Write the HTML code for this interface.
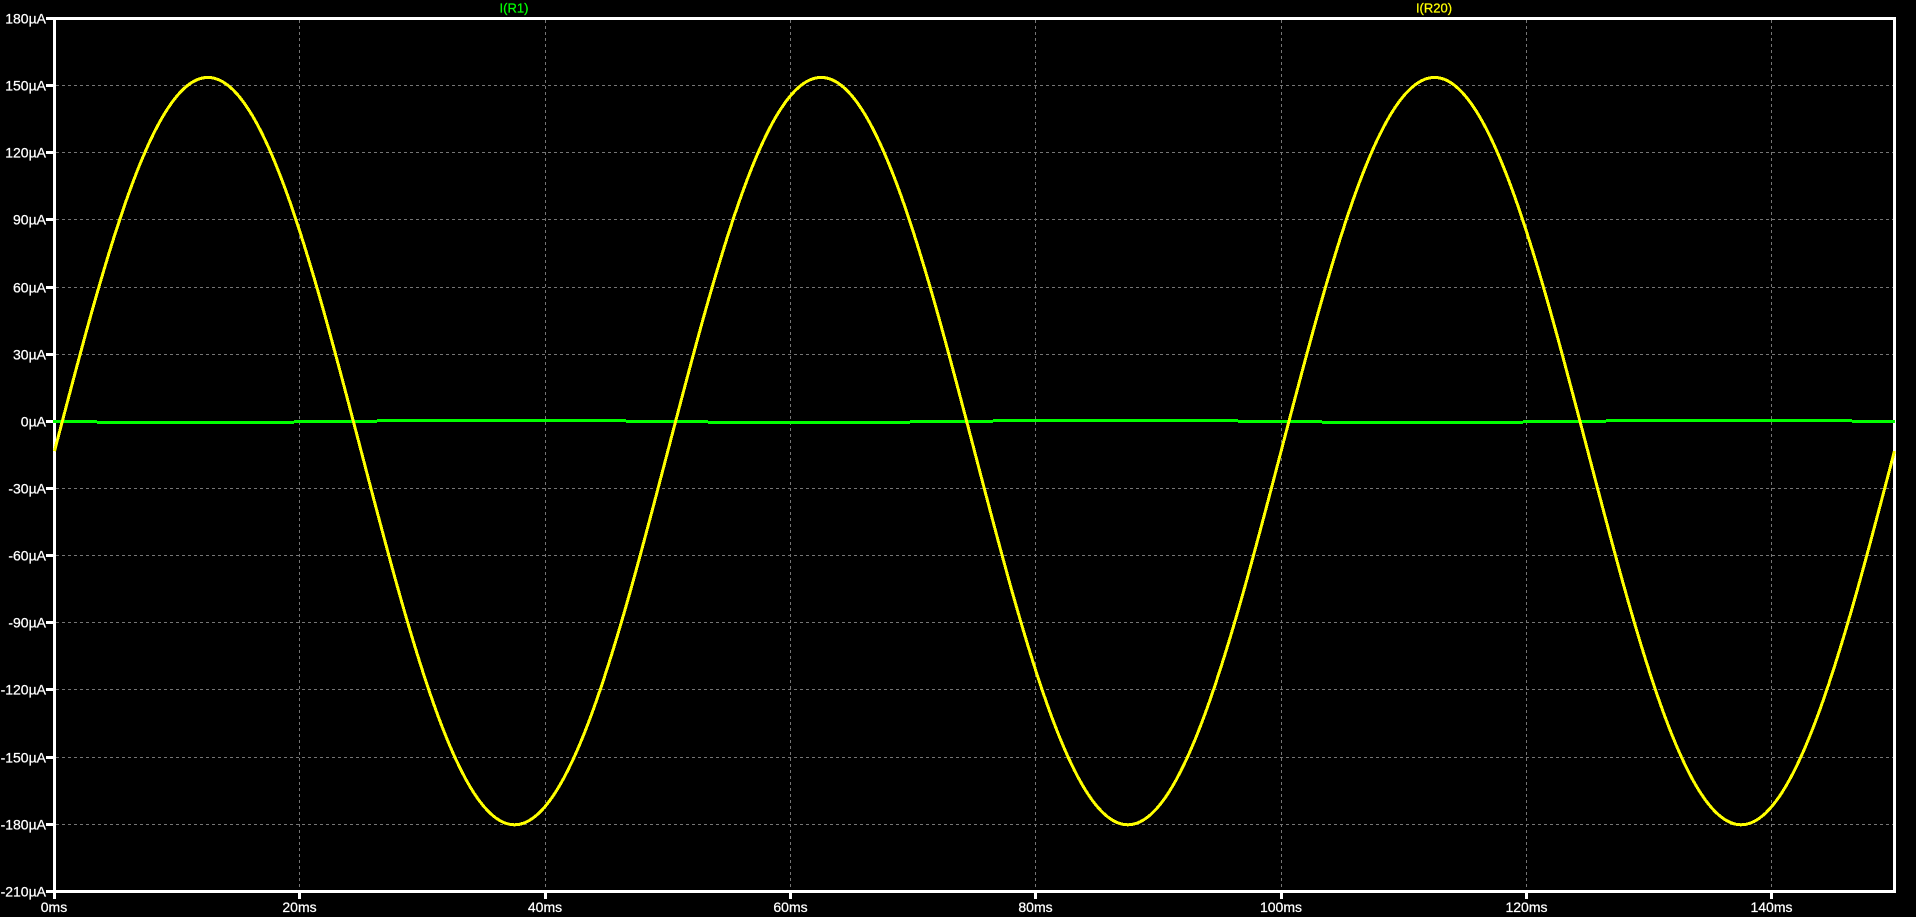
<!DOCTYPE html>
<html>
<head>
<meta charset="utf-8">
<style>
html,body{margin:0;padding:0;background:#000;width:1916px;height:917px;overflow:hidden}
svg{display:block;position:absolute;left:0;top:0}
text{font-family:"Liberation Sans",sans-serif;font-size:14px;fill:#fff;stroke:#fff;stroke-width:.25px}
.y{text-anchor:end}
.x{text-anchor:middle}
</style>
</head>
<body>
<svg width="1916" height="917" viewBox="0 0 1916 917" xmlns="http://www.w3.org/2000/svg">
<rect width="1916" height="917" fill="#000"/>
<g stroke="#757575" stroke-width="1" stroke-dasharray="3 3" shape-rendering="crispEdges" fill="none">
<path d="M56 85.5H1893M56 152.5H1893M56 219.5H1893M56 287.5H1893M56 354.5H1893M56 421.5H1893M56 488.5H1893M56 555.5H1893M56 622.5H1893M56 689.5H1893M56 757.5H1893M56 824.5H1893"/>
<path d="M299.5 20V890M545.5 20V890M790.5 20V890M1035.5 20V890M1281.5 20V890M1526.5 20V890M1771.5 20V890"/>
</g>
<g fill="#fff" shape-rendering="crispEdges">
<rect x="53" y="17" width="1843" height="3"/>
<rect x="53" y="890" width="1843" height="3"/>
<rect x="53" y="17" width="3" height="882"/>
<rect x="1893" y="17" width="3" height="876"/>
<rect x="46" y="17" width="7" height="3"/>
<rect x="46" y="84" width="7" height="3"/>
<rect x="46" y="151" width="7" height="3"/>
<rect x="46" y="218" width="7" height="3"/>
<rect x="46" y="286" width="7" height="3"/>
<rect x="46" y="353" width="7" height="3"/>
<rect x="46" y="420" width="7" height="3"/>
<rect x="46" y="487" width="7" height="3"/>
<rect x="46" y="554" width="7" height="3"/>
<rect x="46" y="621" width="7" height="3"/>
<rect x="46" y="688" width="7" height="3"/>
<rect x="46" y="756" width="7" height="3"/>
<rect x="46" y="823" width="7" height="3"/>
<rect x="46" y="890" width="7" height="3"/>
<rect x="298" y="893" width="3" height="6"/>
<rect x="544" y="893" width="3" height="6"/>
<rect x="789" y="893" width="3" height="6"/>
<rect x="1034" y="893" width="3" height="6"/>
<rect x="1280" y="893" width="3" height="6"/>
<rect x="1525" y="893" width="3" height="6"/>
<rect x="1770" y="893" width="3" height="6"/>
</g>
<g fill="#00ff00" shape-rendering="crispEdges">
<rect x="53" y="420" width="44" height="3"/>
<rect x="97" y="421" width="197" height="3"/>
<rect x="294" y="420" width="83" height="3"/>
<rect x="377" y="419" width="249" height="3"/>
<rect x="626" y="420" width="82" height="3"/>
<rect x="708" y="421" width="202" height="3"/>
<rect x="910" y="420" width="83" height="3"/>
<rect x="993" y="419" width="245" height="3"/>
<rect x="1238" y="420" width="84" height="3"/>
<rect x="1322" y="421" width="201" height="3"/>
<rect x="1523" y="420" width="83" height="3"/>
<rect x="1606" y="419" width="246" height="3"/>
<rect x="1852" y="420" width="43" height="3"/>
</g>
<path fill="none" stroke="#ffff00" stroke-width="3" shape-rendering="crispEdges" d="M54.5 451.1
c50 -191.4 97.84 -373.7 153.33 -373.7 c55.49 0 103.33 182.3 153.33 373.7 c50 191.4 97.84 373.7 153.33 373.7 c55.49 0 103.33 -182.3 153.33 -373.7
c50 -191.4 97.84 -373.7 153.33 -373.7 c55.49 0 103.33 182.3 153.33 373.7 c50 191.4 97.84 373.7 153.33 373.7 c55.49 0 103.33 -182.3 153.33 -373.7
c50 -191.4 97.84 -373.7 153.33 -373.7 c55.49 0 103.33 182.3 153.33 373.7 c50 191.4 97.84 373.7 153.33 373.7 c55.49 0 103.33 -182.3 153.33 -373.7"/>
<g>
<text class="y" x="46" y="23.5">180µA</text>
<text class="y" x="46" y="90.5">150µA</text>
<text class="y" x="46" y="157.5">120µA</text>
<text class="y" x="46" y="224.5">90µA</text>
<text class="y" x="46" y="292.5">60µA</text>
<text class="y" x="46" y="359.5">30µA</text>
<text class="y" x="46" y="426.5">0µA</text>
<text class="y" x="46" y="493.5">-30µA</text>
<text class="y" x="46" y="560.5">-60µA</text>
<text class="y" x="46" y="627.5">-90µA</text>
<text class="y" x="46" y="694.5">-120µA</text>
<text class="y" x="46" y="762.5">-150µA</text>
<text class="y" x="46" y="829.5">-180µA</text>
<text class="y" x="46" y="896.5">-210µA</text>
</g>
<g>
<text class="x" x="54" y="912">0ms</text>
<text class="x" x="299.5" y="912">20ms</text>
<text class="x" x="545" y="912">40ms</text>
<text class="x" x="790.5" y="912">60ms</text>
<text class="x" x="1035.5" y="912">80ms</text>
<text class="x" x="1281" y="912">100ms</text>
<text class="x" x="1526.5" y="912">120ms</text>
<text class="x" x="1771.5" y="912">140ms</text>
</g>
<text class="x" x="514" y="12.5" style="font-size:13px;fill:#00ff00;stroke:#00ff00">I(R1)</text>
<text class="x" x="1434" y="12.5" style="font-size:13px;fill:#ffff00;stroke:#ffff00">I(R20)</text>
</svg>
</body>
</html>
